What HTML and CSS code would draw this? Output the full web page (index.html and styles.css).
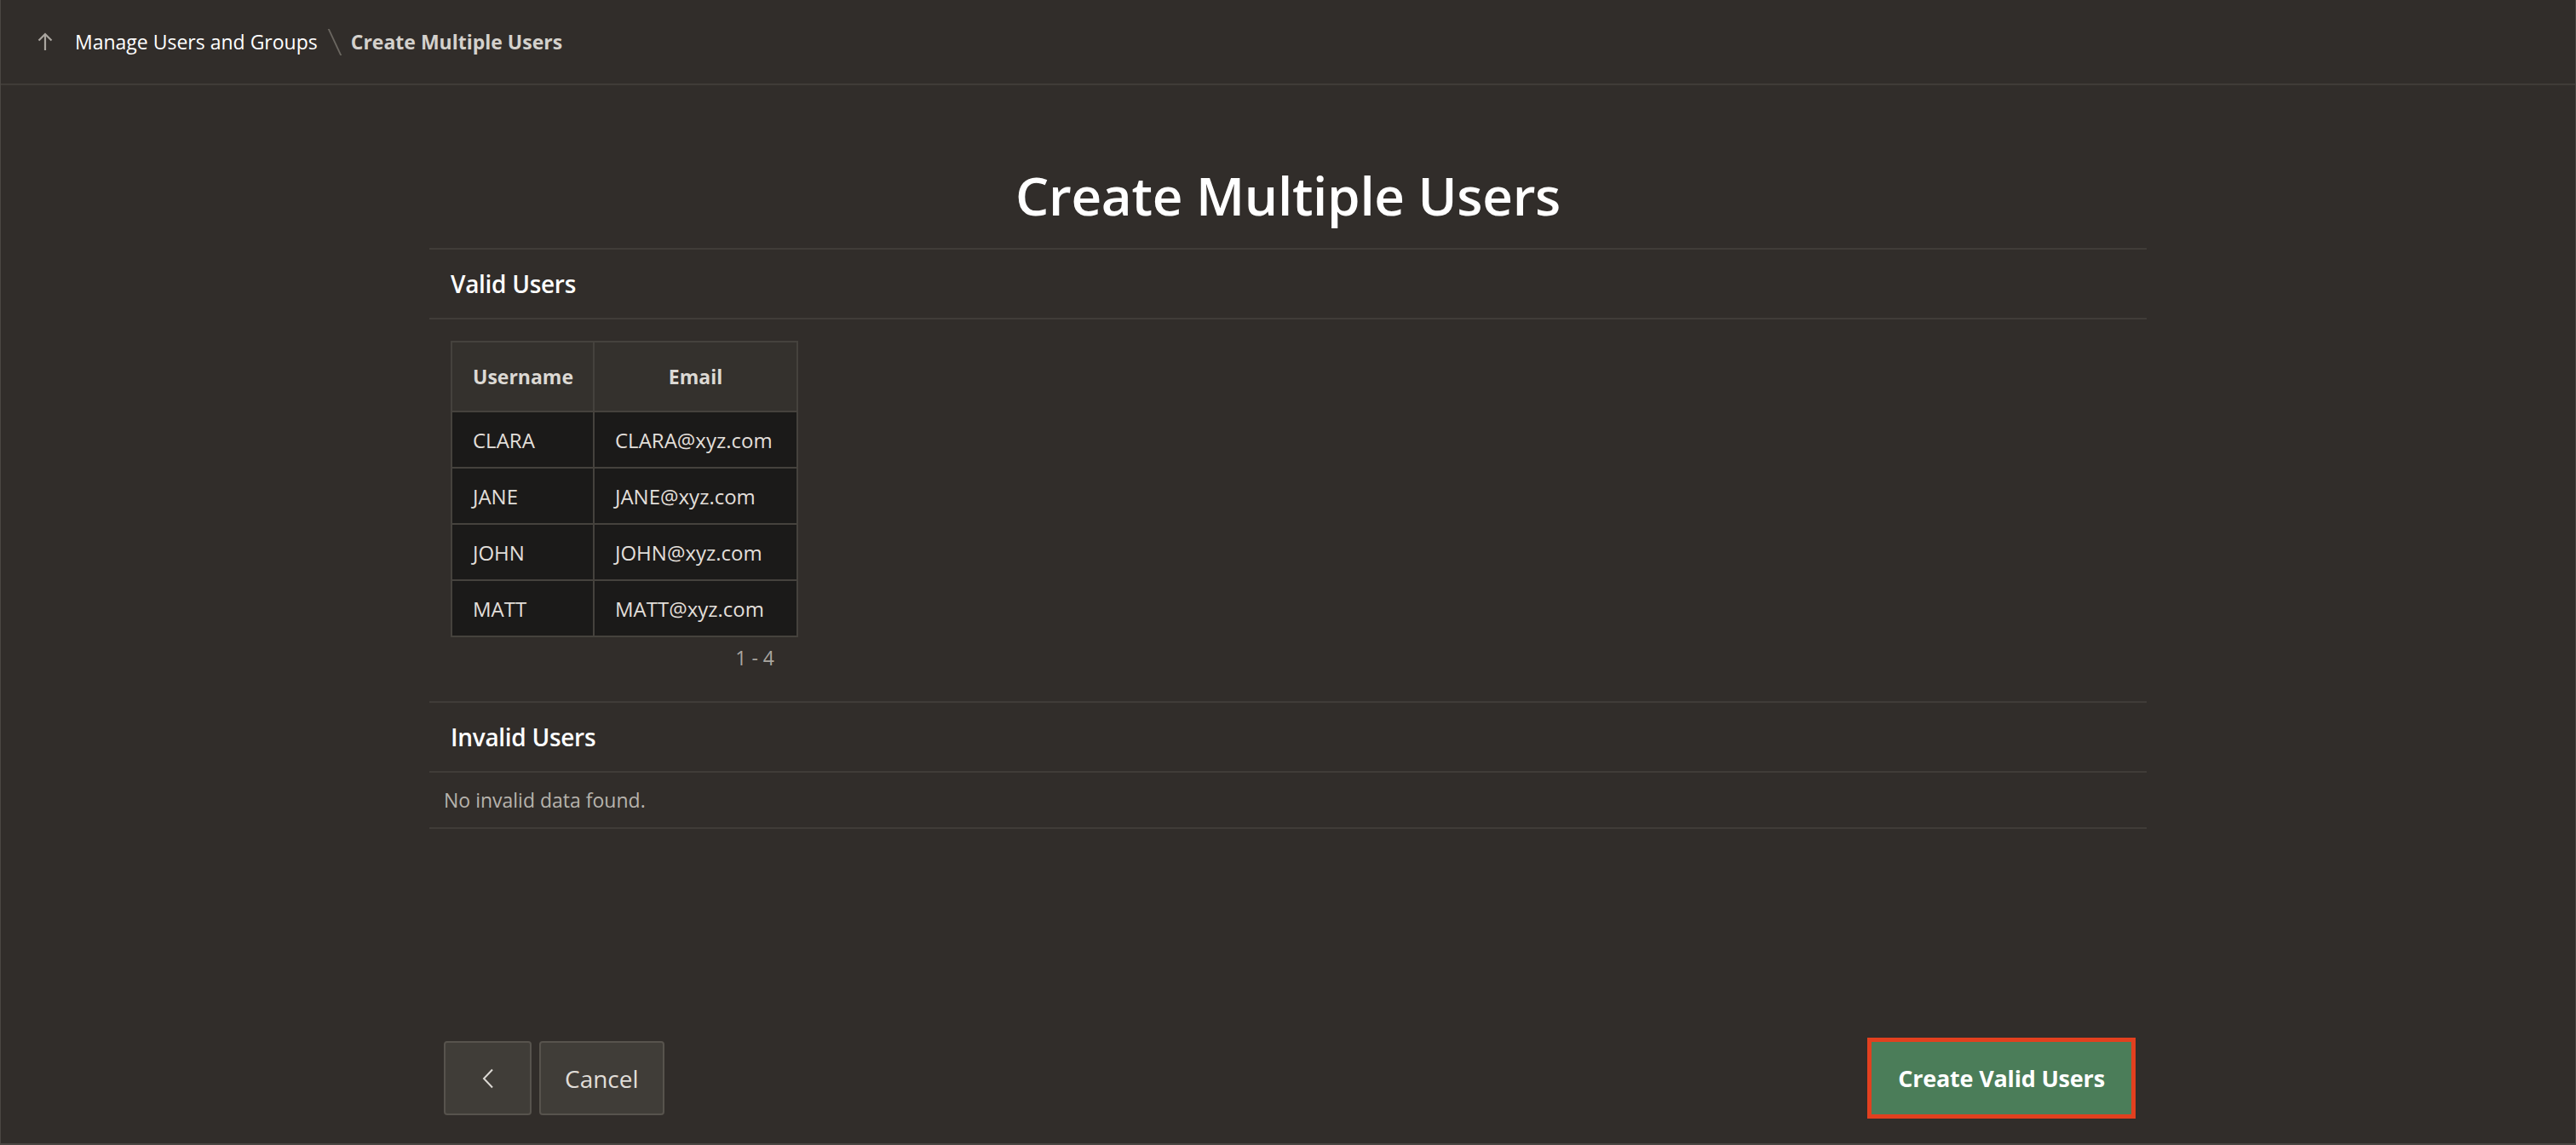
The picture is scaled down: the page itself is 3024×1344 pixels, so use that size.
FILE: index.html
```html
<!DOCTYPE html>
<html lang="en">
<head>
<meta charset="utf-8">
<title>Create Multiple Users</title>
<link rel="stylesheet" href="styles.css">
</head>
<body>
<div class="frame">
  <header class="topbar">
    <svg class="up-icon" width="18" height="22" viewBox="0 0 18 22" aria-hidden="true">
      <path d="M9 21V2M1.5 9.5L9 2l7.5 7.5" fill="none" stroke="#a9a59f" stroke-width="2.2"/>
    </svg>
    <nav class="crumbs">
      <span class="crumb">Manage Users and Groups</span>
      <span class="sep"></span>
      <span class="crumb current">Create Multiple Users</span>
    </nav>
  </header>

  <main class="content">
    <h1 class="page-title">Create Multiple Users</h1>

    <section class="region">
      <h2 class="region-title">Valid Users</h2>
      <div class="region-body table-body">
        <table class="report">
          <colgroup><col class="c1"><col class="c2"></colgroup>
          <thead>
            <tr><th class="col-user">Username</th><th class="col-email">Email</th></tr>
          </thead>
          <tbody>
            <tr><td>CLARA</td><td>CLARA@xyz.com</td></tr>
            <tr><td>JANE</td><td>JANE@xyz.com</td></tr>
            <tr><td>JOHN</td><td>JOHN@xyz.com</td></tr>
            <tr><td>MATT</td><td>MATT@xyz.com</td></tr>
          </tbody>
        </table>
        <div class="pagination">1 - 4</div>
      </div>
    </section>

    <section class="region">
      <h2 class="region-title">Invalid Users</h2>
      <div class="region-body empty">No invalid data found.</div>
    </section>
  </main>

  <footer class="button-bar">
    <div class="left-buttons">
      <button class="btn btn-icon" type="button" aria-label="Previous">
        <svg width="16" height="24" viewBox="0 0 16 24" aria-hidden="true">
          <path d="M13 1.5L3 12l10 10.5" fill="none" stroke="#dcd9d4" stroke-width="2"/>
        </svg>
      </button>
      <button class="btn" type="button">Cancel</button>
    </div>
    <button class="btn btn-primary" type="button">Create Valid Users</button>
  </footer>
</div>
</body>
</html>
```

FILE: styles.css
```css
* { box-sizing: border-box; }

html, body {
  margin: 0;
  padding: 0;
  background: #312d2a;
}

body {
  font-family: "Open Sans", "Noto Sans", "Liberation Sans", sans-serif;
  color: #ffffff;
}

.frame {
  height: 1344px;
  display: flex;
  flex-direction: column;
  border-left: 1px solid #4a4642;
  border-right: 1px solid #4a4642;
  border-bottom: 2px solid #4a4642;
}

.topbar {
  height: 100px;
  flex: none;
  display: flex;
  align-items: center;
  padding-left: 43px;
  border-bottom: 2px solid #403c38;
}

.up-icon { display: block; margin-right: 26px; margin-top: 0; }

.crumbs {
  display: flex;
  align-items: center;
  font-size: 23px;
  margin-top: 0;
}

.crumb { color: #ffffff; }

.crumb.current {
  color: #d4d1cc;
  font-weight: 700;
}

.sep {
  width: 2px;
  height: 31px;
  background: #6b6761;
  transform: skewX(25deg);
  margin: 0 18px 0 19px;
}

.content {
  width: 2016px;
  margin: 0 auto;
  flex: none;
}

.page-title {
  margin: 0;
  text-align: center;
  font-size: 62px;
  font-weight: 600;
  line-height: 1;
  padding-top: 98px;
  height: 193px;
  border-bottom: 2px solid #403c38;
  letter-spacing: -0.3px;
}

.region { border-bottom: 2px solid #403c38; }

.region-title {
  margin: 0;
  height: 82px;
  display: flex;
  align-items: center;
  padding-left: 25px;
  font-size: 28px;
  font-weight: 600;
  border-bottom: 2px solid #403c38;
  letter-spacing: -0.3px;
}

.table-body {
  padding: 25px 25px 35px 25px;
}

.report {
  border-collapse: collapse;
  table-layout: fixed;
  width: 406px;
  font-size: 24px;
  color: #e2dfda;
  border: 2px solid #45423d;
}

.report col.c1 { width: 167px; }
.report col.c2 { width: 239px; }

.report th {
  background: #34312d;
  height: 82px;
  font-size: 23px;
  font-weight: 700;
  color: #dcd9d4;
  border: 2px solid #45423d;
  padding: 0 24px;
  white-space: nowrap;
}

.report th.col-user { text-align: left; }
.report th.col-email { text-align: center; }

.report td {
  background: #1b1a19;
  height: 66px;
  padding: 0 24px;
  border: 2px solid #45423d;
  white-space: nowrap;
}

.pagination {
  width: 406px;
  text-align: right;
  padding-right: 26px;
  padding-top: 8px;
  font-size: 23px;
  color: #aaa6a0;
}

.empty {
  height: 64px;
  display: flex;
  align-items: center;
  padding-left: 17px;
  font-size: 23px;
  color: #b7b3ad;
}

.button-bar {
  margin-top: auto;
  width: 2016px;
  margin-left: auto;
  margin-right: auto;
  display: flex;
  justify-content: space-between;
  align-items: center;
  padding: 0 18px 33px 17px;
}

.left-buttons { display: flex; gap: 9px; }

.btn {
  height: 87px;
  border-radius: 4px;
  background: #403d38;
  border: 2px solid #57534d;
  color: #e0ddd8;
  font-family: inherit;
  font-size: 28px;
  padding: 0 28px;
  display: flex;
  align-items: center;
  justify-content: center;
}

.btn-icon { width: 103px; padding: 0; }

.btn-primary {
  height: 85px;
  width: 305px;
  background: #4b7d59;
  border: none;
  border-radius: 0;
  color: #ffffff;
  font-size: 27px;
  font-weight: 700;
  letter-spacing: -0.2px;
  outline: 5px solid #e2401f;
  padding: 0;
}
```
